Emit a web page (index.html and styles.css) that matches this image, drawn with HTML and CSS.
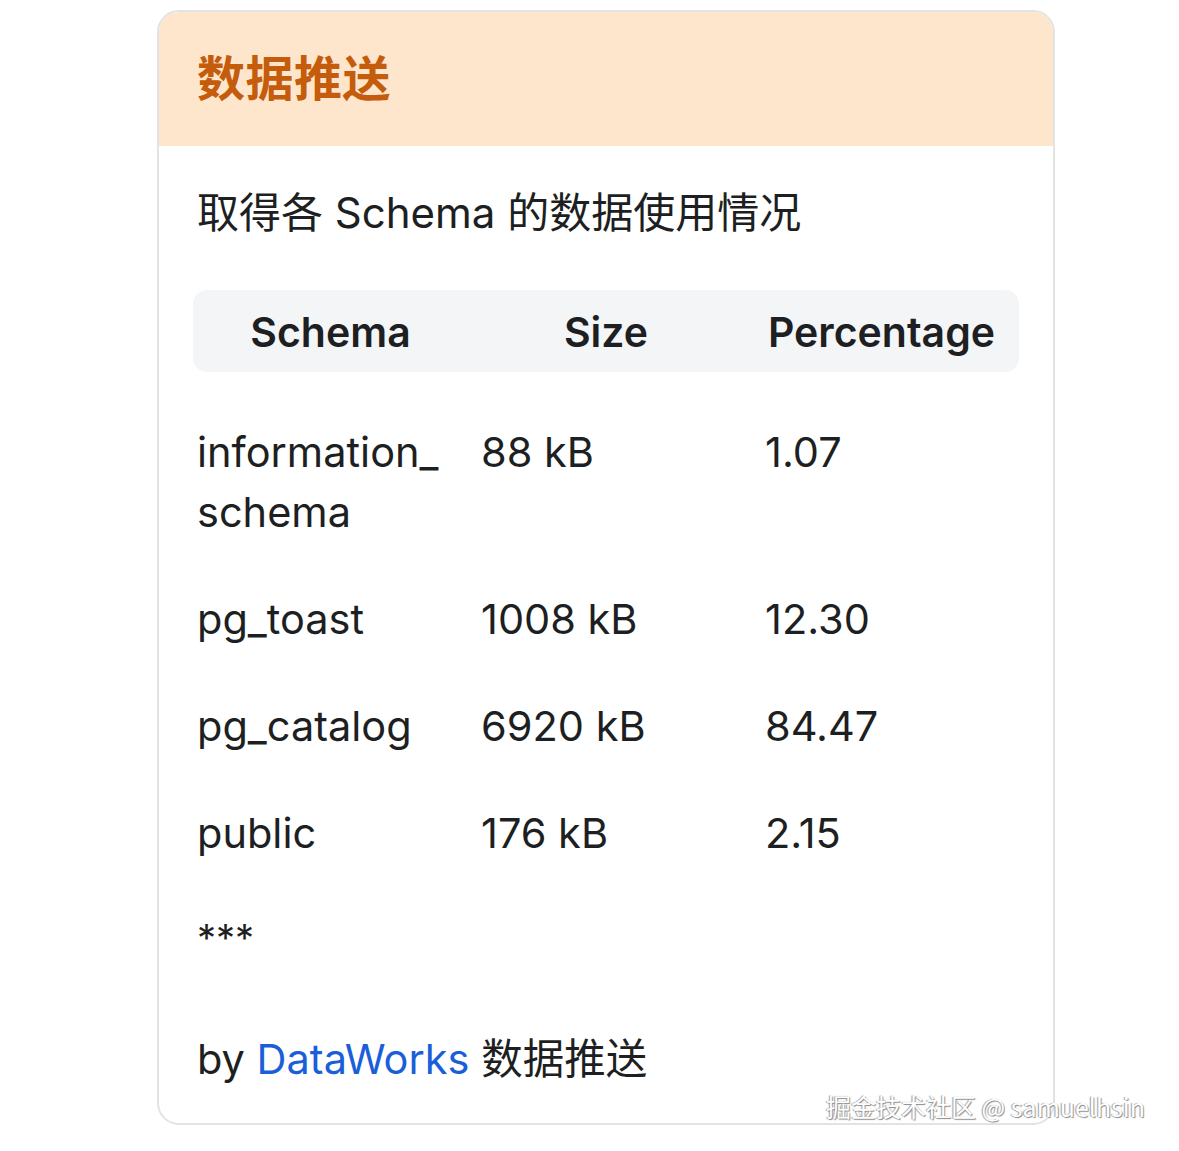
FILE: index.html
```html
<!DOCTYPE html>
<html lang="zh-CN">
<head>
<meta charset="utf-8">
<link rel="stylesheet" href="styles.css">
</head>
<body>
<div class="card">
  <div class="card-header"><h1 class="title">数据推送</h1></div>
  <div class="card-body">
    <p class="subtitle">取得各 Schema 的数据使用情况</p>
    <div class="table">
      <div class="thead">
        <div class="th">Schema</div>
        <div class="th">Size</div>
        <div class="th">Percentage</div>
      </div>
      <div class="tbody">
        <div class="row"><div class="td">information_<br>schema</div><div class="td">88 kB</div><div class="td">1.07</div></div>
        <div class="row"><div class="td">pg_toast</div><div class="td">1008 kB</div><div class="td">12.30</div></div>
        <div class="row"><div class="td">pg_catalog</div><div class="td">6920 kB</div><div class="td">84.47</div></div>
        <div class="row"><div class="td">public</div><div class="td">176 kB</div><div class="td">2.15</div></div>
      </div>
    </div>
    <p class="stars">***</p>
    <p class="footer">by <a class="link" href="#">DataWorks</a> 数据推送</p>
  </div>
</div>
<div class="watermark">掘金技术社区 @ samuelhsin</div>
</body>
</html>
```

FILE: styles.css
```css
html, body {
  margin: 0;
  padding: 0;
  background: #ffffff;
}
body {
  font-family: "Inter", "Noto Sans CJK SC", sans-serif;
  color: #1d1f22;
  width: 1179px;
  height: 1151px;
  position: relative;
  overflow: hidden;
}
.card {
  margin: 10px 0 0 157px;
  width: 898px;
  height: 1115px;
  box-sizing: border-box;
  border: 2px solid #e3e3e3;
  border-radius: 22px;
  overflow: hidden;
  display: flex;
  flex-direction: column;
}
.card-header {
  background: #fde6cc;
  height: 134px;
  display: flex;
  align-items: center;
  padding-left: 38px;
  padding-bottom: 8px;
  box-sizing: border-box;
  flex-shrink: 0;
}
.title {
  margin: 0;
  font-family: "Noto Sans CJK SC", sans-serif;
  font-size: 48px;
  font-weight: 700;
  color: #c45c0c;
  line-height: 1;
  letter-spacing: 0.5px;
}
.card-body {
  padding: 0 33px 0 34px;
}
.subtitle {
  margin: 38px 0 0 4px;
  font-size: 42px;
  line-height: 58px;
  font-weight: 400;
}
.table {
  margin-top: 48px;
  width: 826px;
}
.thead {
  display: grid;
  grid-template-columns: 275px 276px 275px;
  background: #f3f5f7;
  border-radius: 14px;
  height: 82px;
  align-items: center;
}
.th {
  text-align: center;
  font-size: 41px;
  font-weight: 600;
  line-height: 1;
  padding-top: 2px;
}
.tbody {
  padding-top: 26px;
}
.row {
  display: grid;
  grid-template-columns: 284px 284px 1fr;
  padding: 24px 0 23px 4px;
}
.td {
  font-size: 41.5px;
  line-height: 60px;
}
.stars {
  margin: 22px 0 0 4px;
  font-size: 38px;
  line-height: 60px;
}
.footer {
  margin: 61px 0 0 4px;
  font-size: 41.5px;
  line-height: 60px;
}
.link {
  color: #1a5fd8;
  text-decoration: none;
}
.watermark {
  position: absolute;
  left: 826px;
  top: 1089px;
  font-family: "Noto Sans CJK SC", sans-serif;
  font-size: 25px;
  line-height: 34px;
  color: #ffffff;
  text-shadow: 1px 1px 1px #8a8a8a, -1px 0 1px #9a9a9a;
  white-space: nowrap;
}
```
